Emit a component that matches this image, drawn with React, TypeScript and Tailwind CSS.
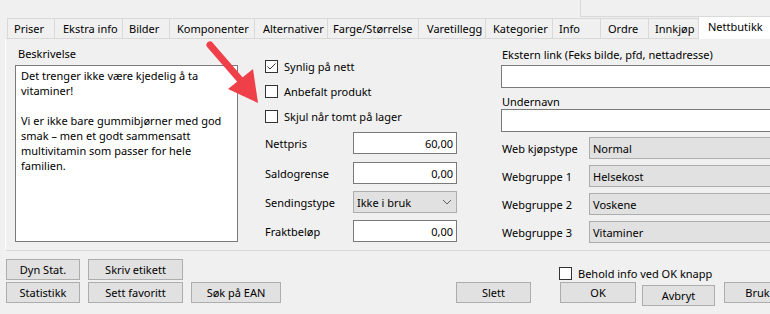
import type { ReactNode } from 'react';

const TABS: { label: string; w: number; pl: number }[] = [
  { label: 'Priser', w: 47, pl: 6 },
  { label: 'Ekstra info', w: 68, pl: 8 },
  { label: 'Bilder', w: 47, pl: 6 },
  { label: 'Komponenter', w: 85, pl: 7 },
  { label: 'Alternativer', w: 73, pl: 8 },
  { label: 'Farge/Størrelse', w: 91, pl: 5 },
  { label: 'Varetillegg', w: 67, pl: 8 },
  { label: 'Kategorier', w: 67, pl: 7 },
  { label: 'Info', w: 48, pl: 6 },
  { label: 'Ordre', w: 48, pl: 7 },
  { label: 'Innkjøp', w: 50, pl: 6 },
];

const DESCRIPTION = [
  'Det trenger ikke være kjedelig å ta',
  'vitaminer!',
  '',
  'Vi er ikke bare gummibjørner med god',
  'smak – men et godt sammensatt',
  'multivitamin som passer for hele',
  'familien.',
];

function Checkbox({ checked }: { checked?: boolean }) {
  return (
    <span className="flex h-[13px] w-[13px] shrink-0 items-center justify-center border border-[#333333] bg-white">
      {checked && (
        <svg width="11" height="11" viewBox="0 0 11 11">
          <polyline points="1.5,5.5 4,8 9.5,2.5" fill="none" stroke="#333333" strokeWidth="1" />
        </svg>
      )}
    </span>
  );
}

function Btn({ w, className = '', children }: { w: string; className?: string; children: ReactNode }) {
  return (
    <div className={`flex h-[21px] shrink-0 items-center justify-center border border-[#adadad] bg-[#e1e1e1] ${w} ${className}`}>
      {children}
    </div>
  );
}

function NumField({ label, value, className = '' }: { label: string; value: string; className?: string }) {
  return (
    <div className={`flex h-[22px] items-center ${className}`}>
      <span className="w-[88px]">{label}</span>
      <div className="flex h-[22px] w-[104px] items-center justify-end border border-[#7a7a7a] bg-white pr-[3px]">
        {value}
      </div>
    </div>
  );
}

function WebSelect({ label, value, className = '' }: { label: string; value: string; className?: string }) {
  return (
    <div className={`flex h-[22px] items-center ${className}`}>
      <span className="w-[88px] pl-[1px]">{label}</span>
      <div className="flex h-[22px] w-[220px] items-center border border-[#adadad] bg-[#e1e1e1] pl-[3px]">
        {value}
      </div>
    </div>
  );
}

export default function App() {
  return (
    <div className="relative h-[314px] w-[770px] overflow-hidden bg-[#f0f0f0] font-['Noto_Sans',sans-serif] text-[11px] leading-[15px] text-black">
      {/* top strip */}
      <div className="flex h-[16px] justify-end">
        <div className="h-[17px] w-[190px] border-b border-l border-[#d9d9d9]" />
      </div>

      {/* tabs */}
      <div className="relative z-10 flex h-[22px] items-end pl-[7px]">
        {TABS.map((t) => (
          <div
            key={t.label}
            className="flex h-[20px] shrink-0 items-center whitespace-nowrap border-l border-t border-[#d9d9d9] bg-[#f0f0f0]"
            style={{ width: t.w, paddingLeft: t.pl }}
          >
            {t.label}
          </div>
        ))}
        <div className="-mb-px flex h-[23px] w-[80px] shrink-0 items-start whitespace-nowrap border-l border-r border-t border-[#d9d9d9] bg-white pl-[9px] pt-[2px]">
          Nettbutikk
        </div>
      </div>

      {/* tab page */}
      <div className="ml-[5px] flex h-[213px] border-b border-l border-t border-b-[#d9d9d9] border-l-white border-t-[#d9d9d9]">
        {/* description */}
        <div className="ml-[9px] w-[223px] shrink-0 pt-[7px]">
          <div className="mb-[4px] pl-[3px]">Beskrivelse</div>
          <div className="h-[177px] border border-[#7a7a7a] bg-white pl-[5px] pt-[2px]">
            {DESCRIPTION.map((line, i) => (
              <div key={i} className="h-[15px] whitespace-nowrap">
                {line}
              </div>
            ))}
          </div>
        </div>

        {/* middle column */}
        <div className="ml-[27px] w-[192px] shrink-0 pt-[15px]">
          <label className="flex h-[25px] items-center gap-[6px]">
            <Checkbox checked />
            Synlig på nett
          </label>
          <label className="flex h-[25px] items-center gap-[6px]">
            <Checkbox />
            Anbefalt produkt
          </label>
          <label className="flex h-[25px] items-center gap-[6px]">
            <Checkbox />
            Skjul når tomt på lager
          </label>
          <NumField label="Nettpris" value="60,00" className="mt-[3px]" />
          <NumField label="Saldogrense" value="0,00" className="mt-[8px]" />
          <div className="mt-[7px] flex h-[22px] items-center">
            <span className="w-[88px]">Sendingstype</span>
            <div className="flex h-[22px] w-[104px] items-center justify-between border border-[#adadad] bg-[#e1e1e1] pl-[3px] pr-[4px]">
              Ikke i bruk
              <svg width="10" height="6" viewBox="0 0 10 6">
                <polyline points="1,1 5,5 9,1" fill="none" stroke="#606060" strokeWidth="1" />
              </svg>
            </div>
          </div>
          <NumField label="Fraktbeløp" value="0,00" className="mt-[7px]" />
        </div>

        {/* right column */}
        <div className="ml-[44px] shrink-0 pt-[8px]">
          <div className="mb-[3px] pl-[1px]">Ekstern link (Feks bilde, pfd, nettadresse)</div>
          <div className="h-[23px] w-[300px] border border-[#7a7a7a] bg-white" />
          <div className="h-[21px] pl-[1px] pt-[6px]">Undernavn</div>
          <div className="h-[23px] w-[300px] border border-[#7a7a7a] bg-white" />
          <WebSelect label="Web kjøpstype" value="Normal" className="mt-[5px]" />
          <WebSelect label="Webgruppe 1" value="Helsekost" className="mt-[6px]" />
          <WebSelect label="Webgruppe 2" value="Voskene" className="mt-[6px]" />
          <WebSelect label="Webgruppe 3" value="Vitaminer" className="mt-[6px]" />
        </div>
      </div>

      {/* bottom bar */}
      <div className="flex pt-[8px]">
        <div className="flex flex-col gap-[2px] pl-[6px]">
          <div className="flex gap-[8px]">
            <Btn w="w-[74px]">Dyn Stat.</Btn>
            <Btn w="w-[95px]">Skriv etikett</Btn>
          </div>
          <div className="flex gap-[8px]">
            <Btn w="w-[74px]">Statistikk</Btn>
            <Btn w="w-[95px]">Sett favoritt</Btn>
            <Btn w="w-[90px]">Søk på EAN</Btn>
          </div>
        </div>
        <div className="ml-[175px] flex flex-col">
          <label className="mt-[6px] flex h-[17px] items-center gap-[6px] whitespace-nowrap pl-[103px]">
            <Checkbox />
            Behold info ved OK knapp
          </label>
          <div className="flex items-start">
            <Btn w="w-[75px]">Slett</Btn>
            <Btn w="w-[76px]" className="ml-[29px]">OK</Btn>
            <Btn w="w-[73px]" className="ml-[6px] mt-[3px]">Avbryt</Btn>
            <Btn w="w-[67px]" className="ml-[9px]">Bruk</Btn>
          </div>
        </div>
      </div>

      {/* annotation arrow */}
      <svg className="pointer-events-none absolute left-0 top-0" width="770" height="314" viewBox="0 0 770 314">
        <line x1="210" y1="45" x2="242" y2="82" stroke="#ef3f49" strokeWidth="7" strokeLinecap="round" />
        <polygon points="258,103 228,89 253,69" fill="#ef3f49" />
      </svg>
    </div>
  );
}
